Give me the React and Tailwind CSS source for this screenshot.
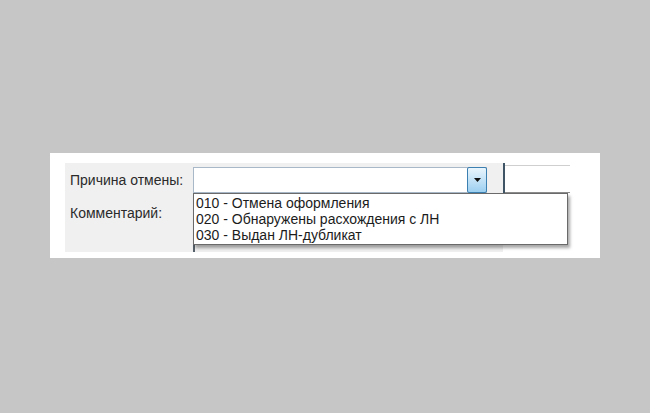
import React from "react";

const reasons = [
  "010 - Отмена оформления",
  "020 - Обнаружены расхождения с ЛН",
  "030 - Выдан ЛН-дубликат",
];

export default function App() {
  return (
    <div className="h-[413px] w-[650px] bg-[#c6c6c6] pt-[153px] pl-[50px] font-['Liberation_Sans',Arial,sans-serif] text-[14px] text-[#2a2a2a]">
      <div className="flex w-[550px] h-[105px] bg-white pt-[10px] pl-[15px]">
        {/* form panel */}
        <div className="relative w-[438px] h-[89px] bg-[#f0f0f0] pl-[5px]">
          <div className="flex items-center h-[30px] pt-[4px]">
            <span className="w-[123px] leading-[16px]">Причина отмены:</span>
            <div className="flex w-[294px] h-[26px] bg-white border border-[#a9b8c8]">
              <div className="flex-1" />
              <div className="-my-px -mr-px w-[20px] h-[26px] rounded-[2px] border border-[#3c7fb1] bg-gradient-to-b from-[#eaf6fd] to-[#9ccff0] flex items-center justify-center">
                <svg width="7" height="4" viewBox="0 0 7 4">
                  <path d="M0 0h7L3.5 4z" fill="#111" />
                </svg>
              </div>
            </div>
          </div>
          <div className="flex mt-[4px]">
            <span className="w-[123px] pt-[8px] leading-[16px]">Комментарий:</span>
            <div className="w-[294px] h-[55px] border-l-2 border-[#56606a]" />
          </div>

          {/* opened list */}
          <div className="absolute left-[128px] top-[30px] w-[375px] h-[52px] bg-white border border-[#6a6a6a] py-px shadow-[2px_3px_3px_rgba(0,0,0,0.35)]">
            {reasons.map((r) => (
              <div key={r} className="px-[2px] text-[14px] leading-[16px] text-[#1c1c1c] whitespace-nowrap">
                {r}
              </div>
            ))}
          </div>
        </div>

        {/* splitter + right field */}
        <div className="w-[2px] h-[32px] bg-[#3f5566]" />
        <div className="w-[65px] h-[28px] mt-[2px] border-t border-[#cfcfcf] border-b border-b-[#8c8c8c]" />
      </div>
    </div>
  );
}
